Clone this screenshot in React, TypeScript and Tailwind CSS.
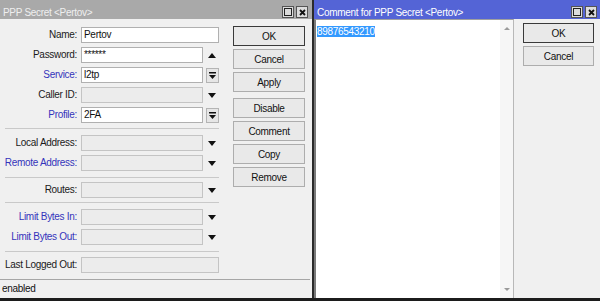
import React from 'react';

type Tail = 'none' | 'up' | 'down' | 'box';

interface Field {
  label: string;
  blue?: boolean;
  value?: string;
  editable?: boolean;
  tail: Tail;
}

// gap = margin above the group's divider and below it
const groups: { fields: Field[]; above: string; below: string }[] = [
  {
    fields: [
      { label: 'Name:', value: 'Pertov', editable: true, tail: 'none' },
      { label: 'Password:', value: '******', editable: true, tail: 'up' },
      { label: 'Service:', blue: true, value: 'l2tp', editable: true, tail: 'box' },
      { label: 'Caller ID:', tail: 'down' },
      { label: 'Profile:', blue: true, value: '2FA', editable: true, tail: 'box' },
    ],
    above: '',
    below: '',
  },
  {
    fields: [
      { label: 'Local Address:', tail: 'down' },
      { label: 'Remote Address:', blue: true, tail: 'down' },
    ],
    above: 'mt-[5px]',
    below: 'mt-[6px]',
  },
  {
    fields: [{ label: 'Routes:', tail: 'down' }],
    above: 'mt-[6px]',
    below: 'mt-[4px]',
  },
  {
    fields: [
      { label: 'Limit Bytes In:', blue: true, tail: 'down' },
      { label: 'Limit Bytes Out:', blue: true, tail: 'down' },
    ],
    above: 'mt-[4px]',
    below: 'mt-[6px]',
  },
  {
    fields: [{ label: 'Last Logged Out:', tail: 'none' }],
    above: 'mt-[6px]',
    below: 'mt-[5px]',
  },
];

const DownArrow = () => (
  <svg width="8" height="5" viewBox="0 0 8 5">
    <path d="M0 0h8L4 5z" fill="#111" />
  </svg>
);

const UpArrow = () => (
  <svg width="8" height="5" viewBox="0 0 8 5">
    <path d="M0 5h8L4 0z" fill="#111" />
  </svg>
);

const BoxArrow = () => (
  <div className="w-[13px] h-[15px] border border-[#b4b4b4] bg-[#e6e6e6] flex items-center justify-center">
    <svg width="7" height="7" viewBox="0 0 7 7">
      <rect x="0" y="0" width="7" height="1.5" fill="#111" />
      <path d="M0 3h7L3.5 7z" fill="#111" />
    </svg>
  </div>
);

const FieldRow = ({ f }: { f: Field }) => (
  <div className="flex h-4 items-center">
    <div className={`w-[77px] text-right leading-4 whitespace-nowrap ${f.blue ? 'text-[#3434bb]' : 'text-[#1a1a1a]'}`}>
      {f.label}
    </div>
    <div
      className={`ml-[4px] h-4 border leading-[14px] pl-[2px] text-[#111] ${f.tail === 'none' ? 'w-[138px]' : 'w-[122px]'} ${
        f.editable ? 'bg-white border-[#b0b0b0]' : 'bg-[#ececec] border-[#c4c4c4]'
      }`}
    >
      {f.value}
    </div>
    {f.tail !== 'none' && (
      <div className="ml-[2px] w-[14px] h-4 flex items-center justify-center">
        {f.tail === 'up' && <UpArrow />}
        {f.tail === 'down' && <DownArrow />}
        {f.tail === 'box' && <BoxArrow />}
      </div>
    )}
  </div>
);

const Btn = ({ label, primary, className = '' }: { label: string; primary?: boolean; className?: string }) => (
  <div
    className={`h-5 flex items-center justify-center bg-[#e9e9e9] border text-[#111] ${
      primary ? 'border-[#3a3a3a]' : 'border-[#adadad]'
    } ${className}`}
  >
    {label}
  </div>
);

const TitleButtons = () => (
  <div className="flex gap-[2px] pt-[6px]">
    <div className="w-[12px] h-[12px] bg-[#dcdcdc] border border-[#555] flex items-center justify-center">
      <div className="w-[8px] h-[8px] border border-[#222]" />
    </div>
    <div className="w-[12px] h-[12px] bg-[#dcdcdc] border border-[#555] flex items-center justify-center">
      <svg width="7" height="7" viewBox="0 0 7 7">
        <path d="M1 1l5 5M6 1L1 6" stroke="#111" strokeWidth="1.8" />
      </svg>
    </div>
  </div>
);

const App: React.FC = () => {
  return (
    <div className="w-[600px] h-[301px] flex flex-col bg-[#f0f0f0] text-[10px] tracking-[-0.3px] font-['Liberation_Sans',Arial,sans-serif] overflow-hidden">
      <div className="flex h-[298px]">
        {/* PPP Secret window */}
        <div className="w-[312px] flex flex-col bg-[#f0f0f0]">
          <div className="h-[19px] bg-[#a9a9a9] flex justify-between pl-[3px] pr-[4px]">
            <span className="pt-[7px] leading-[12px] text-[#efefef]">PPP Secret &lt;Pertov&gt;</span>
            <TitleButtons />
          </div>
          <div className="flex-1 flex">
            <div className="w-[219px] pt-[8px] flex flex-col">
              {groups.map((g, gi) => (
                <React.Fragment key={gi}>
                  {gi > 0 && <div className={`ml-[5px] w-[214px] h-px bg-[#c9c9c9] ${g.above}`} />}
                  <div className={`flex flex-col gap-1 ${g.below}`}>
                    {g.fields.map(f => (
                      <FieldRow key={f.label} f={f} />
                    ))}
                  </div>
                </React.Fragment>
              ))}
            </div>
            <div className="ml-[14px] w-[72px] pt-[7px] flex flex-col gap-[3px]">
              <Btn label="OK" primary />
              <Btn label="Cancel" />
              <Btn label="Apply" />
              <Btn label="Disable" className="mt-[3px]" />
              <Btn label="Comment" />
              <Btn label="Copy" />
              <Btn label="Remove" />
            </div>
          </div>
          <div className="h-[19px] border-t border-[#a6a6a6] mr-[2px] pl-[2px] leading-[18px] text-[#111]">enabled</div>
        </div>

        <div className="w-[2px] bg-[#2b2b2b]" />

        {/* Comment window */}
        <div className="flex-1 flex flex-col bg-[#f0f0f0]">
          <div className="h-[19px] bg-[#5464d6] flex justify-between pl-[3px] pr-[3px]">
            <span className="pt-[7px] leading-[12px] text-white">Comment for PPP Secret &lt;Pertov&gt;</span>
            <TitleButtons />
          </div>
          <div className="flex-1 flex">
            <div className="w-[200px] flex bg-white border-l-2 border-t border-r border-l-[#7a7a7a] border-t-[#a0a0a0] border-r-[#b8b8b8]">
              <div className="flex-1 pl-[1px] pt-[4px]">
                <span className="bg-[#3399ff] text-white leading-[11px] inline-block">89876543210</span>
              </div>
              <div className="w-[13px] bg-[#f6f6f6] flex flex-col items-center justify-between py-[7px]">
                <svg width="6" height="3" viewBox="0 0 6 3">
                  <path d="M0 3h6L3 0z" fill="#9a9a9a" />
                </svg>
                <svg width="6" height="3" viewBox="0 0 6 3">
                  <path d="M0 0h6L3 3z" fill="#9a9a9a" />
                </svg>
              </div>
            </div>
            <div className="ml-[9px] w-[71px] pt-[4px] flex flex-col gap-[3px]">
              <Btn label="OK" primary />
              <Btn label="Cancel" />
            </div>
          </div>
        </div>
      </div>
      <div className="h-[3px] bg-[#1c1c1c]" />
    </div>
  );
};

export default App;
